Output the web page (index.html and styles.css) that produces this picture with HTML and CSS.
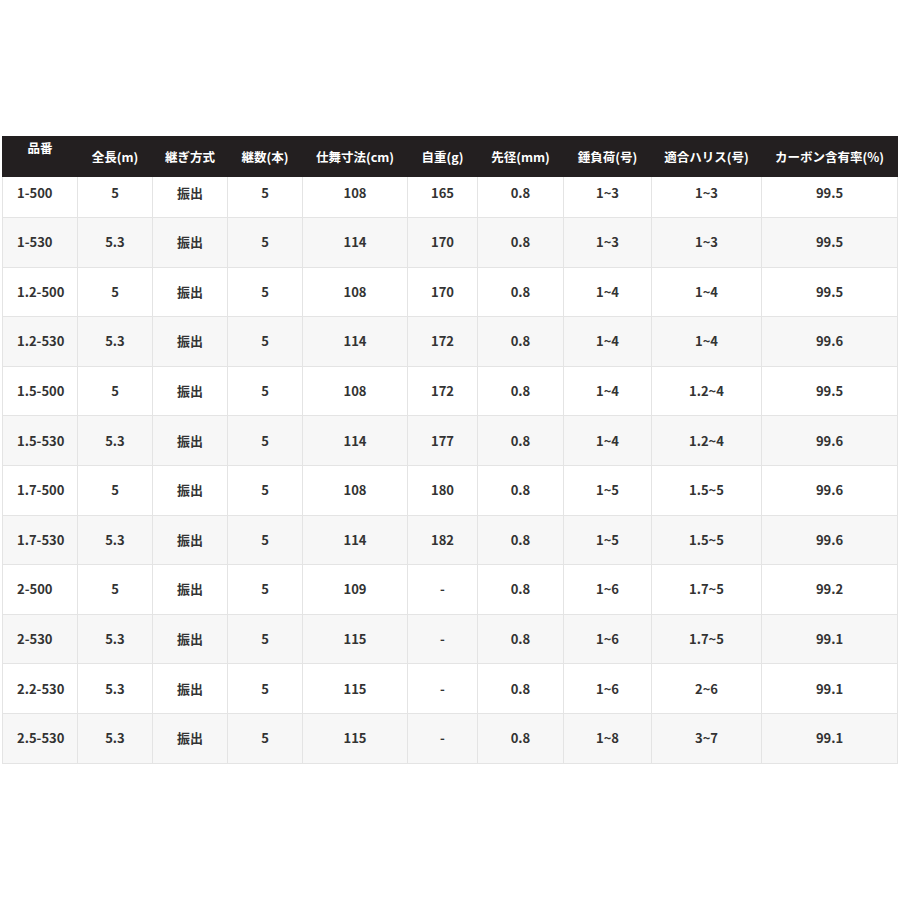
FILE: index.html
```html
<!DOCTYPE html>
<html lang="ja">
<head>
<meta charset="utf-8">
<link rel="stylesheet" href="styles.css">
</head>
<body>
<table class="spec">
  <colgroup>
    <col class="c1"><col class="c2"><col class="c3"><col class="c4"><col class="c5">
    <col class="c6"><col class="c7"><col class="c8"><col class="c9"><col class="c10">
  </colgroup>
  <thead>
    <tr class="head">
      <th class="top">品番</th><th>全長(m)</th><th>継ぎ方式</th><th>継数(本)</th><th>仕舞寸法(cm)</th>
      <th>自重(g)</th><th>先径(mm)</th><th>錘負荷(号)</th><th>適合ハリス(号)</th><th>カーボン含有率(%)</th>
    </tr>
  </thead>
  <tbody>
    <tr class="first"><td>1-500</td><td>5</td><td>振出</td><td>5</td><td>108</td><td>165</td><td>0.8</td><td>1~3</td><td>1~3</td><td>99.5</td></tr>
    <tr><td>1-530</td><td>5.3</td><td>振出</td><td>5</td><td>114</td><td>170</td><td>0.8</td><td>1~3</td><td>1~3</td><td>99.5</td></tr>
    <tr><td>1.2-500</td><td>5</td><td>振出</td><td>5</td><td>108</td><td>170</td><td>0.8</td><td>1~4</td><td>1~4</td><td>99.5</td></tr>
    <tr><td>1.2-530</td><td>5.3</td><td>振出</td><td>5</td><td>114</td><td>172</td><td>0.8</td><td>1~4</td><td>1~4</td><td>99.6</td></tr>
    <tr><td>1.5-500</td><td>5</td><td>振出</td><td>5</td><td>108</td><td>172</td><td>0.8</td><td>1~4</td><td>1.2~4</td><td>99.5</td></tr>
    <tr><td>1.5-530</td><td>5.3</td><td>振出</td><td>5</td><td>114</td><td>177</td><td>0.8</td><td>1~4</td><td>1.2~4</td><td>99.6</td></tr>
    <tr><td>1.7-500</td><td>5</td><td>振出</td><td>5</td><td>108</td><td>180</td><td>0.8</td><td>1~5</td><td>1.5~5</td><td>99.6</td></tr>
    <tr><td>1.7-530</td><td>5.3</td><td>振出</td><td>5</td><td>114</td><td>182</td><td>0.8</td><td>1~5</td><td>1.5~5</td><td>99.6</td></tr>
    <tr><td>2-500</td><td>5</td><td>振出</td><td>5</td><td>109</td><td>-</td><td>0.8</td><td>1~6</td><td>1.7~5</td><td>99.2</td></tr>
    <tr><td>2-530</td><td>5.3</td><td>振出</td><td>5</td><td>115</td><td>-</td><td>0.8</td><td>1~6</td><td>1.7~5</td><td>99.1</td></tr>
    <tr><td>2.2-530</td><td>5.3</td><td>振出</td><td>5</td><td>115</td><td>-</td><td>0.8</td><td>1~6</td><td>2~6</td><td>99.1</td></tr>
    <tr><td>2.5-530</td><td>5.3</td><td>振出</td><td>5</td><td>115</td><td>-</td><td>0.8</td><td>1~8</td><td>3~7</td><td>99.1</td></tr>
  </tbody>
</table>
</body>
</html>
```
FILE: styles.css
```css
html, body {
  margin: 0;
  padding: 0;
  background: #ffffff;
}

body {
  font-family: "Noto Sans CJK JP", "Noto Sans", sans-serif;
  font-weight: 700;
  font-size: 13px;
  line-height: 18px;
  color: #333333;
}

.spec {
  margin: 136px 0 0 2px;
  width: 895px;
  border-collapse: collapse;
  table-layout: fixed;
}

.c1 { width: 75px; }
.c2 { width: 75px; }
.c3 { width: 75px; }
.c4 { width: 75px; }
.c5 { width: 105px; }
.c6 { width: 70px; }
.c7 { width: 86px; }
.c8 { width: 88px; }
.c9 { width: 110px; }
.c10 { width: 136px; }

.spec tr.head { height: 40px; }
.spec tr.first { height: 41px; }
.spec tbody tr { height: 49.6px; }
.spec tbody tr.first { height: 41px; }

.spec th {
  background: #231f20;
  color: #ffffff;
  padding: 0;
  font-size: 12.5px;
  font-weight: 700;
  text-align: center;
  vertical-align: middle;
  white-space: nowrap;
  border: 1px solid #231f20;
}

.spec th.top {
  vertical-align: top;
  padding-top: 2px;
}

.spec td {
  padding: 0;
  text-align: center;
  vertical-align: middle;
  border: 1px solid #e4e4e4;
  white-space: nowrap;
}

.spec td:first-child {
  text-align: left;
  padding-left: 14px;
}

.spec tr.first td {
  vertical-align: top;
  padding-top: 7px;
}

.spec tbody tr:nth-child(even) td {
  background: #f7f7f7;
}
```
